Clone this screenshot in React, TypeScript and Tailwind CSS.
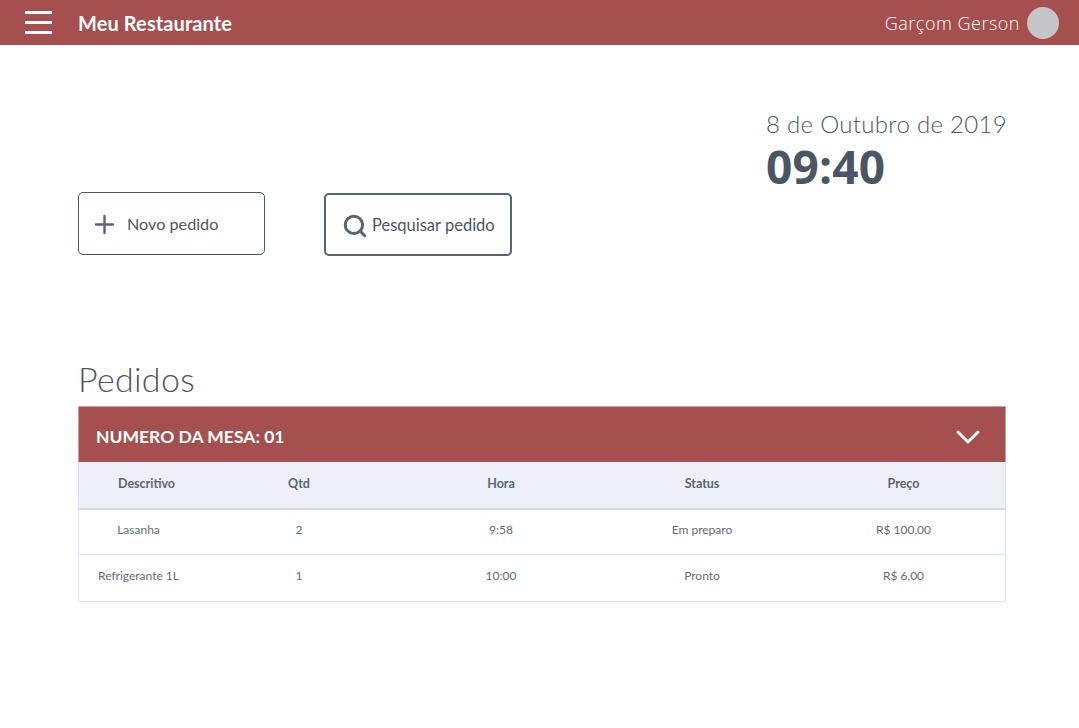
import React from "react";
import { Plus, Search, ChevronDown } from "lucide-react";

const rows = [
  { nome: "Lasanha", qtd: "2", hora: "9:58", status: "Em preparo", preco: "R$ 100,00" },
  { nome: "Refrigerante 1L", qtd: "1", hora: "10:00", status: "Pronto", preco: "R$ 6,00" },
];

const App = () => {
  return (
    <div className="min-h-[728px] bg-white font-['Lato',sans-serif] text-[#4a5664]">
      <header className="h-[45px] bg-[#a54f4f] flex items-center justify-between pl-[25px] pr-[20px] text-white">
        <div className="flex items-center">
          <div className="flex flex-col gap-[7px] w-[27px]">
            <span className="h-[3px] bg-white" />
            <span className="h-[3px] bg-white" />
            <span className="h-[3px] bg-white" />
          </div>
          <span className="ml-[26px] text-[20px] font-bold tracking-[0.1px]">Meu Restaurante</span>
        </div>
        <div className="flex items-center gap-[7px]">
          <span className="pt-[2px] text-[18px] font-light tracking-[0.5px] font-['Open_Sans',sans-serif]">Garçom Gerson</span>
          <div className="w-[32px] h-[32px] rounded-full bg-[#c4c6c8]" />
        </div>
      </header>

      <main className="pl-[78px] pr-[73px]">
        <section className="flex justify-between h-[211px]">
          <div className="flex pt-[147px] items-start">
            <button className="w-[187px] h-[63px] pt-[2px] border border-[#4a5664] rounded-[5px] flex items-center pl-[11px] text-[16.2px]">
              <Plus size={29} strokeWidth={2} className="text-[#566473]" />
              <span className="ml-[8px]">Novo pedido</span>
            </button>
            <button className="ml-[59px] mt-[1px] w-[188px] h-[63px] pt-[2px] border-2 border-[#566473] rounded-[5px] flex items-center pl-[16px] text-[16.5px]">
              <Search size={26} strokeWidth={2.8} className="text-[#566473]" />
              <span className="ml-[4px]">Pesquisar pedido</span>
            </button>
          </div>
          <div className="pt-[61px] w-[240px]">
            <div className="text-[24px] leading-[36px] font-light tracking-[0.3px] whitespace-nowrap">8 de Outubro de 2019</div>
            <div className="text-[46px] leading-[48px] font-bold tracking-[0.2px] font-['Open_Sans',sans-serif]">09:40</div>
          </div>
        </section>

        <h1 className="mt-[99px] text-[34px] leading-[48px] font-light tracking-[0.3px]">Pedidos</h1>

        <section className="mt-[3px] w-[928px]">
          <div className="h-[56px] pt-[5px] bg-[#a54f4f] border-x border-t border-[#cf9d9d] flex items-center justify-between pl-[17px] pr-[17px] text-white">
            <span className="text-[17.5px] font-bold">NUMERO DA MESA: 01</span>
            <ChevronDown size={40} strokeWidth={1.8} />
          </div>
          <div className="border-x border-b border-[#dbe2ec]">
            <div className="h-[48px] pb-[1px] bg-[#edf1f7] border-b-2 border-[#ced6e1] grid grid-cols-[119px_202px_202px_200px_1fr] items-center text-center text-[12.5px] font-bold text-[#5a6674]">
              <span className="pl-4">Descritivo</span>
              <span>Qtd</span>
              <span>Hora</span>
              <span>Status</span>
              <span>Preço</span>
            </div>
            {rows.map((r, i) => (
              <div
                key={r.nome}
                className={
                  i === 0
                    ? "h-[45px] pb-[4px] border-b border-[#dbe2ec] grid grid-cols-[119px_202px_202px_200px_1fr] items-center text-center text-[12px] text-[#5f6b78]"
                    : "h-[46px] pb-[4px] grid grid-cols-[119px_202px_202px_200px_1fr] items-center text-center text-[12px] text-[#5f6b78]"
                }
              >
                <span>{r.nome}</span>
                <span>{r.qtd}</span>
                <span>{r.hora}</span>
                <span>{r.status}</span>
                <span>{r.preco}</span>
              </div>
            ))}
          </div>
        </section>
      </main>
    </div>
  );
};

export default App;
